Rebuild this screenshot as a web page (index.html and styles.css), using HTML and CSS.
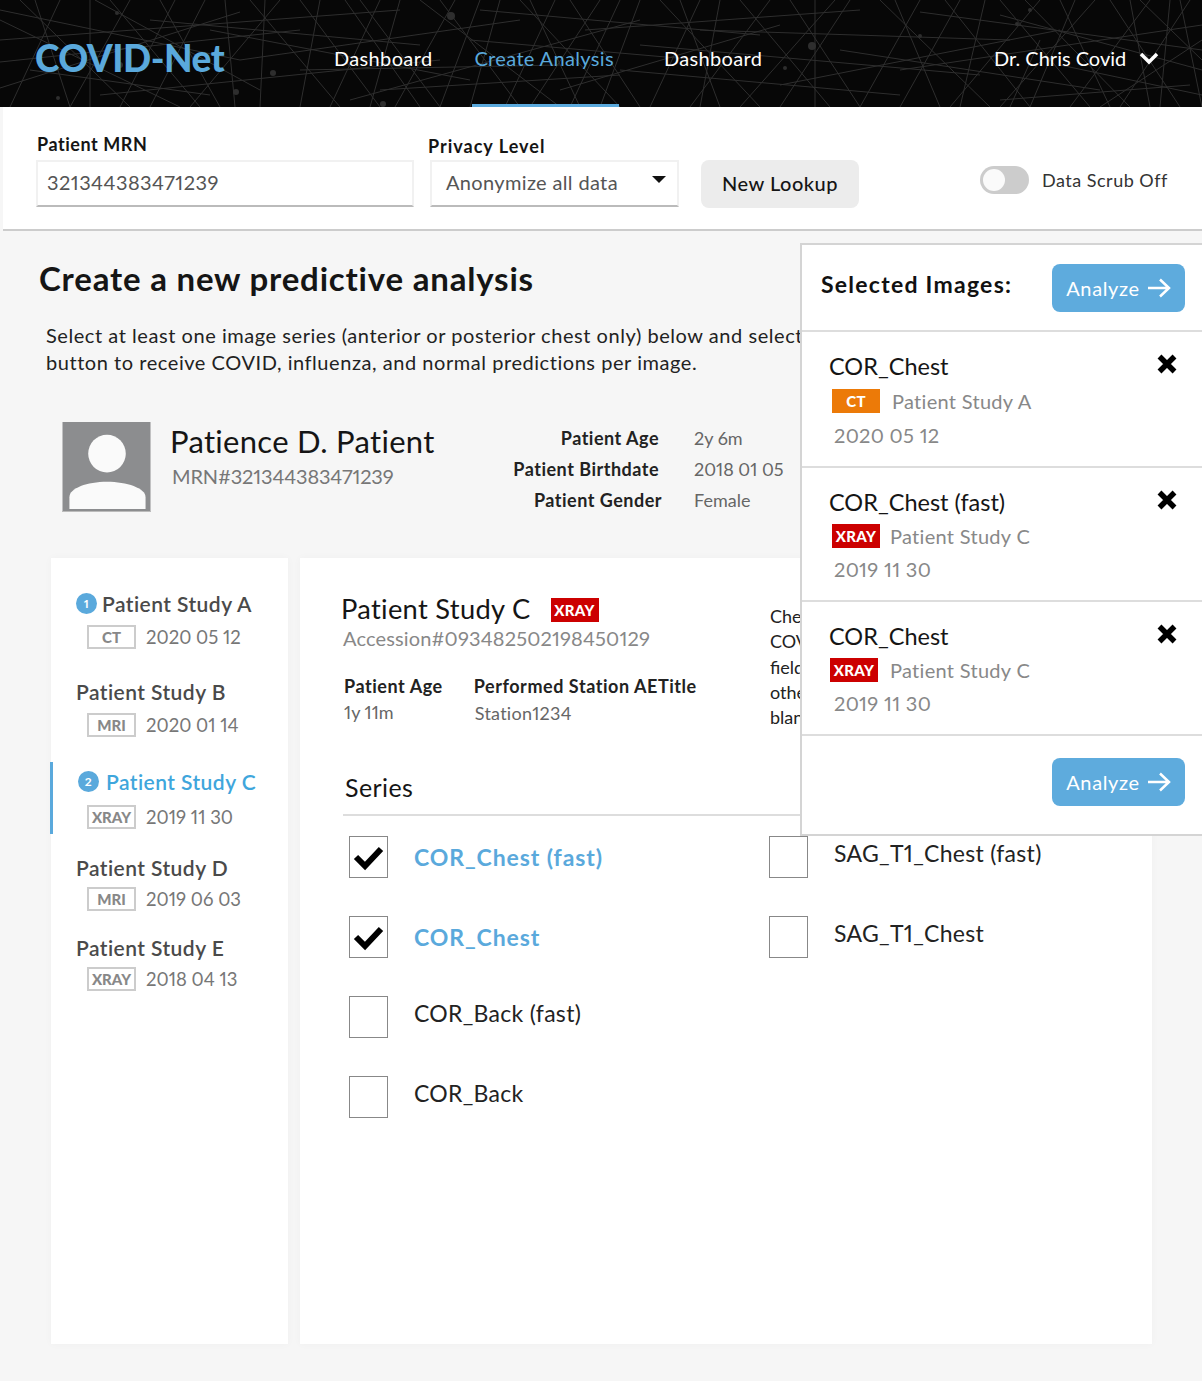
FILE: index.html
```html
<!DOCTYPE html>
<html lang="en">
<head>
    <meta charset="UTF-8">
    <meta name="viewport" content="width=device-width, initial-scale=1.0">
    <title>COVID-Net</title>
    <link rel="stylesheet" href="styles.css">
</head>
<body>
    <header class="topbar">
        <svg class="topbar-bg" width="1202" height="107" viewBox="0 0 1202 107">
            <path class="web" d="M0 20L180 107M20 0L130 107M60 0L10 107M95 0L260 90M130 0L70 107M0 62L300 30M0 88L240 12M160 0L220 107M205 0L150 107M250 0L340 107M280 0L190 107M240 60L520 20M210 30L470 80M320 0L300 107M345 0L420 107M380 0L330 107M420 0L560 107M455 0L395 107M500 0L470 107M470 40L700 60M520 0L620 107M555 0L505 107M600 0L530 107M640 0L600 107M585 30L860 10M620 70L900 95M660 0L760 107M700 0L650 107M740 0L830 107M770 0L690 107M815 0L815 107M850 0L780 107M880 0L990 107M920 0L860 107M960 0L900 107M1000 0L1090 107M1040 0L950 107M1075 0L1030 107M1110 0L1180 107M1150 0L1070 107M1190 0L1120 107M1202 25L900 70M1202 70L1000 15M840 50L1100 90M700 30L1010 40M1140 0L1202 60M1100 107L1202 40M0 40L400 10M100 95L440 60M350 100L640 20M560 90L780 25M1000 100L1190 85M300 70L560 65M1170 0L1160 107M1040 40L1010 107M90 0L90 107M35 0L70 107M110 0L200 107M175 0L120 107M225 0L235 107M265 0L260 107M300 0L380 107M360 0L440 107M400 0L370 107M440 0L520 107M480 0L440 107M530 0L580 107M570 0L640 107M620 0L570 107M680 0L720 107M720 0L700 107M790 0L860 107M835 0L740 107M895 0L940 107M945 0L1030 107M985 0L960 107M1025 0L1130 107M1060 0L1110 107M1095 0L1000 107M1130 0L1150 107M1180 0L1202 107M0 10L240 60M150 20L420 45M380 90L620 75M640 45L980 75M780 85L1060 30M920 12L1202 50M1060 65L1202 95M30 70L210 95M480 10L760 35"/>
            <g class="specks">
                <circle cx="120" cy="65" r="3"/><circle cx="273" cy="73" r="3"/><circle cx="236" cy="92" r="3"/>
                <circle cx="451" cy="16" r="4"/><circle cx="383" cy="104" r="3"/><circle cx="812" cy="46" r="4"/>
                <circle cx="785" cy="68" r="2"/><circle cx="1030" cy="10" r="2"/><circle cx="1017" cy="24" r="2"/>
                <circle cx="117" cy="13" r="2"/><circle cx="58" cy="98" r="2"/><circle cx="920" cy="36" r="2"/>
            </g>
        </svg>
        <div class="logo">COVID-Net</div>
        <nav class="nav">
            <a class="nav-link nav-dash">Dashboard</a>
            <a class="nav-link nav-active">Create Analysis</a>
            <a class="nav-link">Dashboard</a>
        </nav>
        <div class="user">
            Dr. Chris Covid
            <svg class="user-caret" width="20" height="14" viewBox="0 0 20 14"><polyline points="2,3 10,11 18,3"/></svg>
        </div>
    </header>

    <section class="lookup">
        <div class="field field-mrn">
            <label class="field-label">Patient MRN</label>
            <div class="input">321344383471239</div>
        </div>
        <div class="field field-privacy">
            <label class="field-label">Privacy Level</label>
            <div class="input input-select">Anonymize all data<span class="select-arrow"></span></div>
        </div>
        <button class="btn-lookup" type="button">New Lookup</button>
        <div class="scrub">
            <span class="toggle"><span class="toggle-knob"></span></span>
            <span>Data Scrub Off</span>
        </div>
    </section>

    <main class="content">
        <h1 class="page-title">Create a new predictive analysis</h1>
        <p class="intro">Select at least one image series (anterior or posterior chest only) below and select the Analyze<br>button to receive COVID, influenza, and normal predictions per image.</p>

        <div class="patient">
            <svg class="avatar" width="89" height="90" viewBox="0 0 89 90">
                <rect width="89" height="90" fill="#8c8d8f"/>
                <circle cx="45" cy="32" r="19" fill="#fafafa"/>
                <path d="M7 88V76C7 67 25 60.500 45 60.500S84 67 84 76V88Z" fill="#fafafa"/>
            </svg>
            <div class="patient-id">
                <div class="patient-name">Patience D. Patient</div>
                <div class="patient-mrn">MRN#321344383471239</div>
            </div>
            <dl class="patient-facts">
                <div class="fact"><dt>Patient Age</dt><dd>2y 6m</dd></div>
                <div class="fact"><dt>Patient Birthdate</dt><dd>2018 01 05</dd></div>
                <div class="fact fact-gender"><dt>Patient Gender</dt><dd>Female</dd></div>
            </dl>
        </div>

        <div class="columns">
            <aside class="studies">
                <div class="study study-a">
                    <div class="study-name"><span class="count">1</span>Patient Study A</div>
                    <div class="study-meta"><span class="tag">CT</span>2020 05 12</div>
                </div>
                <div class="study study-b">
                    <div class="study-name">Patient Study B</div>
                    <div class="study-meta"><span class="tag">MRI</span>2020 01 14</div>
                </div>
                <div class="study study-c">
                    <div class="study-name"><span class="count">2</span>Patient Study C</div>
                    <div class="study-meta"><span class="tag">XRAY</span>2019 11 30</div>
                </div>
                <div class="study study-d">
                    <div class="study-name">Patient Study D</div>
                    <div class="study-meta"><span class="tag">MRI</span>2019 06 03</div>
                </div>
                <div class="study study-d">
                    <div class="study-name">Patient Study E</div>
                    <div class="study-meta"><span class="tag">XRAY</span>2018 04 13</div>
                </div>
            </aside>

            <section class="detail">
                <div class="detail-top">
                    <div class="detail-info">
                        <div class="detail-title">Patient Study C<span class="badge badge-xray">XRAY</span></div>
                        <div class="accession">Accession#093482502198450129</div>
                        <div class="detail-facts">
                            <div class="detail-fact">
                                <div class="detail-label">Patient Age</div>
                                <div class="detail-value">1y 11m</div>
                            </div>
                            <div class="detail-fact">
                                <div class="detail-label">Performed Station AETitle</div>
                                <div class="detail-value detail-value-low">Station1234</div>
                            </div>
                        </div>
                    </div>
                    <p class="detail-note">Check each series to add it to the<br>COVID-Net analysis. Use the search<br>field to filter the list. Series from<br>other studies stay selected. Leave<br>blank to clear the selection.</p>
                </div>

                <h2 class="series-title">Series</h2>
                <div class="series-grid">
                    <div class="series-col">
                        <div class="series-row">
                            <span class="checkbox"><svg width="38" height="40" viewBox="0 0 38 40"><polyline points="6,20 15,29 31,12"/></svg></span>
                            <span class="series-name series-on">COR_Chest (fast)</span>
                        </div>
                        <div class="series-row">
                            <span class="checkbox"><svg width="38" height="40" viewBox="0 0 38 40"><polyline points="6,20 15,29 31,12"/></svg></span>
                            <span class="series-name series-on">COR_Chest</span>
                        </div>
                        <div class="series-row">
                            <span class="checkbox"></span>
                            <span class="series-name series-up">COR_Back (fast)</span>
                        </div>
                        <div class="series-row">
                            <span class="checkbox"></span>
                            <span class="series-name series-up">COR_Back</span>
                        </div>
                    </div>
                    <div class="series-col">
                        <div class="series-row">
                            <span class="checkbox"></span>
                            <span class="series-name series-up">SAG_T1_Chest (fast)</span>
                        </div>
                        <div class="series-row">
                            <span class="checkbox"></span>
                            <span class="series-name series-up">SAG_T1_Chest</span>
                        </div>
                    </div>
                </div>
            </section>
        </div>
    </main>

    <aside class="selected">
        <div class="selected-head">
            <div class="selected-title">Selected Images:</div>
            <button class="btn-analyze" type="button">Analyze
                <svg width="24" height="20" viewBox="0 0 24 20"><path d="M1 10H22M13 1.500L22 10L13 18.500"/></svg>
            </button>
        </div>
        <div class="pick">
            <div class="pick-name">COR_Chest</div>
            <svg class="pick-x" width="20" height="20" viewBox="0 0 20 20"><path d="M2.500 2.500L17.500 17.500M17.500 2.500L2.500 17.500"/></svg>
            <div class="pick-study"><span class="badge badge-ct">CT</span><span class="pick-study-a">Patient Study A</span></div>
            <div class="pick-date">2020 05 12</div>
        </div>
        <div class="pick">
            <div class="pick-name">COR_Chest (fast)</div>
            <svg class="pick-x" width="20" height="20" viewBox="0 0 20 20"><path d="M2.500 2.500L17.500 17.500M17.500 2.500L2.500 17.500"/></svg>
            <div class="pick-study"><span class="badge badge-xray">XRAY</span><span>Patient Study C</span></div>
            <div class="pick-date">2019 11 30</div>
        </div>
        <div class="pick">
            <div class="pick-name">COR_Chest</div>
            <svg class="pick-x" width="20" height="20" viewBox="0 0 20 20"><path d="M2.500 2.500L17.500 17.500M17.500 2.500L2.500 17.500"/></svg>
            <div class="pick-study pick-study-left"><span class="badge badge-xray">XRAY</span><span>Patient Study C</span></div>
            <div class="pick-date">2019 11 30</div>
        </div>
        <div class="selected-foot">
            <button class="btn-analyze" type="button">Analyze
                <svg width="24" height="20" viewBox="0 0 24 20"><path d="M1 10H22M13 1.500L22 10L13 18.500"/></svg>
            </button>
        </div>
    </aside>
</body>
</html>
```

FILE: styles.css
```css
* {
    box-sizing: border-box;
}
html, body {
    margin: 0;
    padding: 0;
}
body {
    position: relative;
    width: 1202px;
    height: 1381px;
    overflow: hidden;
    background: #f6f6f6;
    color: #151515;
    font-family: "Lato", "Liberation Sans", sans-serif;
    font-size: 20px;
    font-variant-numeric: proportional-nums;
}

/* top bar */
.topbar {
    position: relative;
    display: flex;
    align-items: center;
    height: 107px;
    padding: 8px 0 0 35px;
    background: #070707;
    color: #fff;
    overflow: hidden;
}
.topbar-bg {
    position: absolute;
    top: 0;
    left: 0;
}
.web {
    fill: none;
    stroke: #2e2e2e;
    stroke-width: 1;
}
.specks circle {
    fill: #2e2e2e;
}
.logo {
    position: relative;
    width: 299px;
    color: #5aa9dc;
    font-size: 37px;
    font-weight: 900;
    letter-spacing: -0.500px;
}
.nav {
    position: relative;
    display: flex;
    align-items: center;
    height: 107px;
    margin-top: -8px;
}
.nav-link {
    display: flex;
    align-items: center;
    height: 100%;
    padding-top: 8px;
    margin-right: 50px;
    font-size: 20px;
    letter-spacing: 0.350px;
}
.nav-dash {
    margin-right: 40px;
}
.nav-active {
    padding: 8px 5px 0 2px;
    margin-right: 45px;
    color: #5aa9dc;
    box-shadow: inset 0 -4px 0 -1px #5aa9dc;
}
.user {
    position: absolute;
    top: 46px;
    left: 994px;
    display: flex;
    align-items: center;
    gap: 13px;
    font-size: 20px;
}
.user-caret polyline {
    fill: none;
    stroke: #fff;
    stroke-width: 3.500;
}

/* lookup row */
.lookup {
    display: flex;
    align-items: flex-start;
    height: 124px;
    margin-left: 3px;
    padding-left: 33px;
    background: #fff;
    border-bottom: 2px solid #ccc;
}
.field-label {
    display: block;
    height: 24px;
    color: #151515;
    font-size: 18px;
    font-weight: 700;
    line-height: 24px;
    letter-spacing: 0.550px;
}
.field-mrn {
    width: 394px;
    padding-top: 25px;
}
.field-mrn .field-label {
    margin-left: 1px;
    margin-bottom: 4px;
}
.field-privacy {
    width: 271px;
    padding-top: 27px;
}
.field-privacy .field-label {
    margin-left: -2px;
    margin-bottom: 2px;
    letter-spacing: 1px;
}
.input {
    display: flex;
    align-items: center;
    justify-content: space-between;
    width: 378px;
    height: 47px;
    padding: 0 15px 4px 9px;
    background: #fff;
    border: 2px solid #f1f1f1;
    border-bottom-color: #bbb;
    color: #555;
    font-size: 20px;
    letter-spacing: 0.450px;
}
.input-select {
    width: 249px;
    padding: 0 11px 4px 14px;
    letter-spacing: 0.350px;
}
.select-arrow {
    width: 0;
    height: 0;
    margin-top: -4px;
    border-left: 7px solid transparent;
    border-right: 7px solid transparent;
    border-top: 7px solid #111;
}
.btn-lookup {
    width: 158px;
    height: 48px;
    margin-top: 53px;
    padding: 0 0 2px;
    background: #ececec;
    border: none;
    border-radius: 8px;
    color: #151515;
    font-family: inherit;
    font-size: 20px;
    font-weight: 500;
    letter-spacing: 0.500px;
}
.scrub {
    display: flex;
    align-items: center;
    gap: 13px;
    margin: 59px 0 0 121px;
    color: #333;
    font-size: 18px;
    letter-spacing: 0.500px;
}
.toggle {
    display: block;
    width: 49px;
    height: 28px;
    padding: 3px;
    background: #ccc;
    border-radius: 14px;
}
.toggle-knob {
    display: block;
    width: 22px;
    height: 22px;
    background: #fafafa;
    border-radius: 50%;
}

/* main area */
.content {
    padding: 0 50px 0 51px;
}
.page-title {
    margin: 26px 0 0 -12px;
    height: 42px;
    font-size: 33px;
    font-weight: 700;
    line-height: 42px;
    letter-spacing: 0.800px;
}
.intro {
    width: 1100px;
    margin: 23px 0 0 -5px;
    color: #222;
    font-size: 20px;
    line-height: 27px;
    letter-spacing: 0.550px;
}
.patient {
    display: flex;
    height: 136px;
    margin: 46px 0 0 11px;
}
.avatar {
    flex: none;
    border-bottom: 1px solid #bbb;
}
.patient-id {
    width: 270px;
    margin-left: 19px;
}
.patient-name {
    height: 40px;
    font-size: 31px;
    line-height: 38px;
    letter-spacing: 0.300px;
}
.patient-mrn {
    margin: 0 0 0 2px;
    color: #777;
    font-size: 20px;
    line-height: 28px;
    letter-spacing: -0.150px;
    white-space: nowrap;
}
.patient-facts {
    display: flex;
    flex-direction: column;
    margin: 0;
}
.fact {
    display: flex;
    align-items: center;
    height: 31px;
    white-space: nowrap;
}
.fact dt {
    width: 219px;
    color: #222;
    font-size: 18px;
    font-weight: 700;
    text-align: right;
    letter-spacing: 0.500px;
}
.fact dd {
    margin: 0 0 0 35px;
    color: #666;
    font-size: 18px;
}
.fact-gender dt {
    width: 222px;
}
.fact-gender dd {
    margin-left: 32px;
}
.columns {
    display: flex;
    gap: 12px;
    height: 786px;
}

/* study list */
.studies {
    width: 237px;
    padding: 33px 0 0 25px;
    background: #fff;
    box-shadow: 0 0 8px rgba(0, 0, 0, 0.03);
}
.study {
    position: relative;
    display: flex;
    flex-direction: column;
    gap: 6px;
}
.study-a {
    margin-bottom: 30px;
}
.study-b {
    margin-bottom: 32px;
}
.study-c {
    gap: 8px;
    margin-bottom: 26px;
}
.study-c::before {
    content: "";
    position: absolute;
    top: -7px;
    bottom: -5px;
    left: -26px;
    width: 3px;
    background: #5aa9dc;
}
.study-d {
    gap: 4px;
    margin-bottom: 24px;
}
.study-name {
    display: flex;
    align-items: center;
    height: 28px;
    padding-bottom: 3px;
    color: #4a4a4a;
    font-size: 21px;
    font-weight: 600;
    letter-spacing: 0.450px;
}
.study-c .study-name {
    color: #3fa6dc;
    padding-left: 2px;
}
.count {
    display: flex;
    align-items: center;
    justify-content: center;
    width: 21px;
    height: 21px;
    margin-right: 5px;
    background: #5aa9dc;
    border-radius: 50%;
    color: #fff;
    font-size: 12px;
    font-weight: 700;
}
.study-c .count {
    margin-right: 7px;
}
.study-meta {
    display: flex;
    align-items: center;
    height: 24px;
    margin-left: 11px;
    color: #777;
    font-size: 18.500px;
}
.tag {
    display: flex;
    align-items: center;
    justify-content: center;
    width: 49px;
    height: 24px;
    margin-right: 10px;
    background: #fff;
    border: 2px solid #ccc;
    color: #888;
    font-size: 15px;
    font-weight: 900;
}

/* detail card */
.detail {
    width: 852px;
    padding: 0 0 0 43px;
    background: #fff;
    box-shadow: 0 0 8px rgba(0, 0, 0, 0.03);
}
.detail-top {
    display: flex;
    height: 201px;
}
.detail-info {
    width: 427px;
    flex: none;
}
.detail-title {
    display: flex;
    align-items: center;
    height: 36px;
    margin: 32px 0 0 -2px;
    font-size: 27.300px;
    letter-spacing: 0.300px;
}
.badge {
    display: inline-flex;
    align-items: center;
    justify-content: center;
    flex: none;
    width: 48px;
    height: 24px;
    color: #fff;
    font-size: 15px;
    font-weight: 900;
}
.badge-xray {
    background: #cc0000;
}
.badge-ct {
    background: #ec7a08;
}
.detail-title .badge {
    margin: 4px 0 0 20px;
}
.accession {
    height: 26px;
    margin-top: -1px;
    color: #888;
    font-size: 20px;
    line-height: 26px;
    letter-spacing: 0.150px;
    white-space: nowrap;
}
.detail-facts {
    display: flex;
    gap: 31px;
    margin: 23px 0 0 1px;
}
.detail-label {
    height: 24px;
    color: #222;
    font-size: 18px;
    font-weight: 700;
    line-height: 24px;
    letter-spacing: 0.550px;
}
.detail-value {
    margin-top: 2px;
    color: #666;
    font-size: 18px;
    line-height: 24px;
}
.detail-value-low {
    margin: 3px 0 0 1px;
    letter-spacing: 0.250px;
}
/* runs on under the panel in the reference, only the start of each line shows */
.detail-note {
    width: 30px;
    margin: 46px 0 0 0;
    overflow: hidden;
    color: #222;
    font-size: 18px;
    line-height: 25.300px;
    white-space: nowrap;
}
.series-title {
    height: 55px;
    margin: 0 0 0 2px;
    padding-top: 13px;
    font-size: 25px;
    font-weight: 400;
    line-height: 30px;
    letter-spacing: 0.400px;
}
.series-grid {
    display: flex;
    margin-right: 21px;
    padding-left: 6px;
    border-top: 2px solid #ddd;
}
.series-col {
    flex: none;
    width: 420px;
    padding-top: 20px;
}
.series-row {
    display: flex;
    align-items: center;
    gap: 26px;
    height: 42px;
    margin-bottom: 38px;
}
.checkbox {
    display: block;
    flex: none;
    width: 39px;
    height: 42px;
    background: #fff;
    border: 1px solid #888;
}
.checkbox polyline {
    fill: none;
    stroke: #000;
    stroke-width: 6;
}
.series-name {
    font-size: 23px;
    letter-spacing: 0.300px;
    color: #222;
}
.series-on {
    color: #5aa9dc;
    font-weight: 700;
    letter-spacing: 0.900px;
}
.series-up {
    margin-top: -8px;
}

/* selected images panel, sits over the page */
.selected {
    position: absolute;
    top: 243px;
    left: 800px;
    width: 402px;
    height: 593px;
    background: #fff;
    border: 2px solid #d4d4d4;
    border-right: none;
}
.selected-head {
    display: flex;
    align-items: flex-start;
    justify-content: space-between;
    height: 87px;
    padding: 19px 17px 0 19px;
    border-bottom: 2px solid #ddd;
}
.selected-title {
    margin-top: 6px;
    color: #111;
    font-size: 23px;
    font-weight: 700;
    letter-spacing: 1.250px;
}
.btn-analyze {
    display: flex;
    align-items: center;
    justify-content: center;
    gap: 7px;
    width: 133px;
    height: 48px;
    padding: 0;
    background: #5eabdd;
    border: none;
    border-radius: 8px;
    color: #fff;
    font-family: inherit;
    font-size: 20px;
    letter-spacing: 0.650px;
}
.btn-analyze path {
    fill: none;
    stroke: #fff;
    stroke-width: 2.500;
}
.pick {
    position: relative;
    height: 134px;
    padding: 19px 0 0 27px;
    border-bottom: 2px solid #ddd;
}
.selected-head + .pick {
    height: 136px;
}
.pick-name {
    height: 30px;
    font-size: 23.500px;
    line-height: 30px;
    color: #151515;
}
.pick-x {
    position: absolute;
    top: 22px;
    right: 25px;
}
.pick-x path {
    fill: none;
    stroke: #000;
    stroke-width: 5.500;
}
.pick-study {
    display: flex;
    align-items: center;
    gap: 10px;
    height: 24px;
    margin: 7px 0 0 3px;
    color: #888;
    font-size: 20px;
    letter-spacing: 0.300px;
}
.selected-head + .pick .pick-study {
    margin-top: 8px;
}
.pick-study-a {
    margin-left: 2px;
}
.pick-study-left {
    margin-left: 1px;
    gap: 12px;
}
.pick-date {
    margin: 8px 0 0 5px;
    color: #888;
    font-size: 20px;
    line-height: 26px;
    letter-spacing: 0.300px;
}
.selected-head + .pick .pick-date {
    margin-top: 9px;
}
.selected-foot {
    display: flex;
    justify-content: flex-end;
    padding: 22px 17px 0 0;
}
```
